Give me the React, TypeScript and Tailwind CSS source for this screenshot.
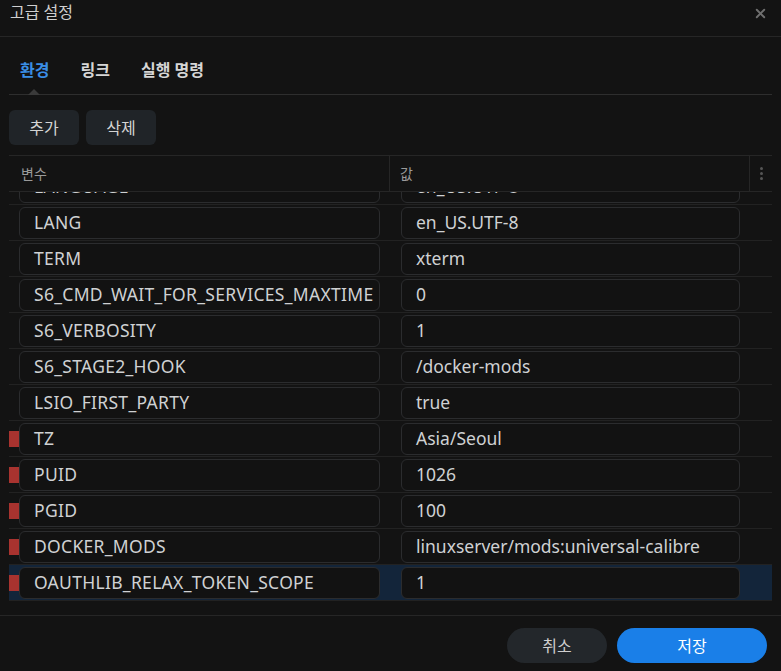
import { X } from "lucide-react";

const rows: { key: string; value: string; mark?: boolean }[] = [
  { key: "LANGUAGE", value: "en_US.UTF-8" },
  { key: "LANG", value: "en_US.UTF-8" },
  { key: "TERM", value: "xterm" },
  { key: "S6_CMD_WAIT_FOR_SERVICES_MAXTIME", value: "0" },
  { key: "S6_VERBOSITY", value: "1" },
  { key: "S6_STAGE2_HOOK", value: "/docker-mods" },
  { key: "LSIO_FIRST_PARTY", value: "true" },
  { key: "TZ", value: "Asia/Seoul", mark: true },
  { key: "PUID", value: "1026", mark: true },
  { key: "PGID", value: "100", mark: true },
  { key: "DOCKER_MODS", value: "linuxserver/mods:universal-calibre", mark: true },
  { key: "OAUTHLIB_RELAX_TOKEN_SCOPE", value: "1", mark: true },
];

function Field({ text, wide }: { text: string; wide?: boolean }) {
  return (
    <div
      className={`h-[32px] rounded-md border border-[#2b2c2e] bg-[#121212] px-[14px] flex items-center overflow-hidden whitespace-nowrap text-[17.5px] text-[#cfd1d3] ${
        wide ? "tracking-[0.3px]" : ""
      }`}
    >
      {text}
    </div>
  );
}

export default function App() {
  return (
    <div
      className="w-[781px] h-[671px] bg-[#131313] text-[#d0d0d0] flex flex-col overflow-hidden"
      style={{ fontFamily: '"Noto Sans", "Noto Sans CJK KR", sans-serif' }}
    >
      {/* Title bar */}
      <div className="h-[37px] flex items-start justify-between pl-[10px] pr-[13px] border-b border-[#262626]">
        <span className="text-[16px] text-[#cfcfcf]">고급 설정</span>
        <X className="w-[15px] h-[15px] mt-[6px] text-[#6f6f6f]" strokeWidth={3} />
      </div>

      {/* Tabs */}
      <div className="mx-[9px] mt-[21px] h-[37px] border-b border-[#2e2e2e] flex items-start gap-[31px] pl-[11px] relative text-[16px] font-semibold">
        <span className="text-[#3a8ee6]">환경</span>
        <span className="text-[#d6d6d6]">링크</span>
        <span className="text-[#d6d6d6]">실행 명령</span>
        <div className="absolute left-[19px] bottom-[-1px] w-0 h-0 border-l-[6px] border-r-[6px] border-b-[6px] border-l-transparent border-r-transparent border-b-[#3a3a3a]" />
      </div>

      {/* Actions */}
      <div className="mx-[9px] mt-[15px] flex gap-[7px]">
        <button className="w-[70px] h-[35px] rounded-md bg-[#202428] text-[16px] text-[#d4d4d4]">추가</button>
        <button className="w-[70px] h-[35px] rounded-md bg-[#202428] text-[16px] text-[#d4d4d4]">삭제</button>
      </div>

      {/* Table */}
      <div className="mx-[9px] mt-[10px] border-t border-[#262626] flex flex-col">
        <div className="h-[36px] flex border-b border-[#262626] text-[14px] text-[#9a9a9a]">
          <div className="w-[381px] border-r border-[#262626] pl-[12px] flex items-center">변수</div>
          <div className="w-[360px] border-r border-[#262626] pl-[10px] flex items-center">값</div>
          <div className="flex-1 flex flex-col items-center justify-center gap-[2px]">
            <span className="w-[3px] h-[3px] rounded-full bg-[#555]" />
            <span className="w-[3px] h-[3px] rounded-full bg-[#555]" />
            <span className="w-[3px] h-[3px] rounded-full bg-[#555]" />
          </div>
        </div>
        <div className="h-[409px] overflow-hidden">
          <div className="mt-[-23px] flex flex-col">
            {rows.map((r, i) => (
              <div
                key={r.key}
                className={`h-[36px] flex items-center border-b border-[#222] relative ${
                  i === rows.length - 1 ? "bg-[#13253a]" : ""
                }`}
              >
                {r.mark && (
                  <span className="absolute left-[-6px] top-[10px] w-[16px] h-[16px] bg-[#a8332f]" />
                )}
                <div className="w-[381px] pl-[10px] pr-[10px]">
                  <Field text={r.key} wide />
                </div>
                <div className="w-[360px] pl-[11px] pr-[10px]">
                  <Field text={r.value} />
                </div>
              </div>
            ))}
          </div>
        </div>
      </div>

      {/* Footer */}
      <div className="mt-[14px] border-t border-[#262626] flex justify-end gap-[10px] pr-[14px] pt-[12px]">
        <button className="w-[100px] h-[35px] rounded-full bg-[#23272b] text-[16px] text-[#cfcfcf]">취소</button>
        <button className="w-[150px] h-[35px] rounded-full bg-[#1a7fe8] text-[16px] text-white">저장</button>
      </div>
    </div>
  );
}
